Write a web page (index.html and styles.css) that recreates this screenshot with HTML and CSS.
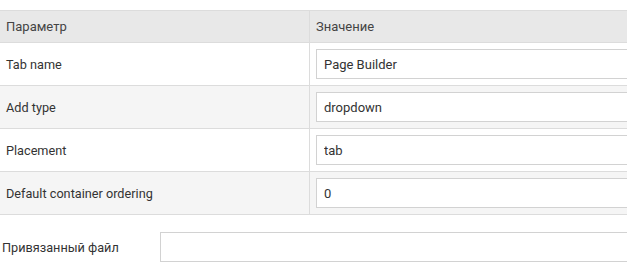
FILE: index.html
```html
<!DOCTYPE html>
<html lang="ru">
<head>
    <meta charset="UTF-8">
    <title>Параметры</title>
    <link rel="stylesheet" href="styles.css">
</head>
<body>
    <table class="params">
        <thead>
            <tr>
                <th class="col-name">Параметр</th>
                <th class="col-value">Значение</th>
            </tr>
        </thead>
        <tbody>
            <tr>
                <td class="col-name">Tab name</td>
                <td class="col-value"><input class="field" type="text" value="Page Builder"></td>
            </tr>
            <tr>
                <td class="col-name">Add type</td>
                <td class="col-value"><input class="field" type="text" value="dropdown"></td>
            </tr>
            <tr>
                <td class="col-name">Placement</td>
                <td class="col-value"><input class="field" type="text" value="tab"></td>
            </tr>
            <tr>
                <td class="col-name">Default container ordering</td>
                <td class="col-value"><input class="field" type="text" value="0"></td>
            </tr>
        </tbody>
    </table>

    <div class="file-row">
        <label class="file-label">Привязанный файл</label>
        <input class="field file-input" type="text" value="">
    </div>
</body>
</html>
```

FILE: styles.css
```css
body {
    margin: 0;
    padding-top: 10px;
    font-family: Roboto, "Liberation Sans", Arial, sans-serif;
    font-size: 13px;
    color: #333;
}
.params {
    width: 100%;
    border-collapse: collapse;
    border-top: 1px solid #dcdcdc;
}
.params th {
    background: #e8e8e8;
    font-weight: normal;
    text-align: left;
    color: #444;
    height: 31px;
    padding: 0 6px;
    border-bottom: 1px solid #dcdcdc;
}
.params td {
    height: 42px;
    padding: 0 6px;
    border-bottom: 1px solid #dcdcdc;
}
.params td.col-name {
    font-size: 12.7px;
}
.params .col-value {
    padding-right: 0;
}
.params tbody tr:nth-child(even) td {
    background: #f5f5f5;
}
.col-name {
    width: 297px;
    border-right: 1px solid #dcdcdc;
}
.field {
    box-sizing: border-box;
    width: 100%;
    height: 30px;
    border: 1px solid #d2d2d2;
    border-right: 0;
    background: #fff;
    padding: 0 7px;
    font-family: inherit;
    font-size: 13px;
    color: #333;
    margin: 0;
    display: block;
}
.file-row {
    display: flex;
    align-items: center;
    margin-top: 17px;
    padding-left: 2px;
}
.file-label {
    width: 158px;
    font-size: 12.7px;
}
.file-input {
    flex: 1;
    width: auto;
}
```
